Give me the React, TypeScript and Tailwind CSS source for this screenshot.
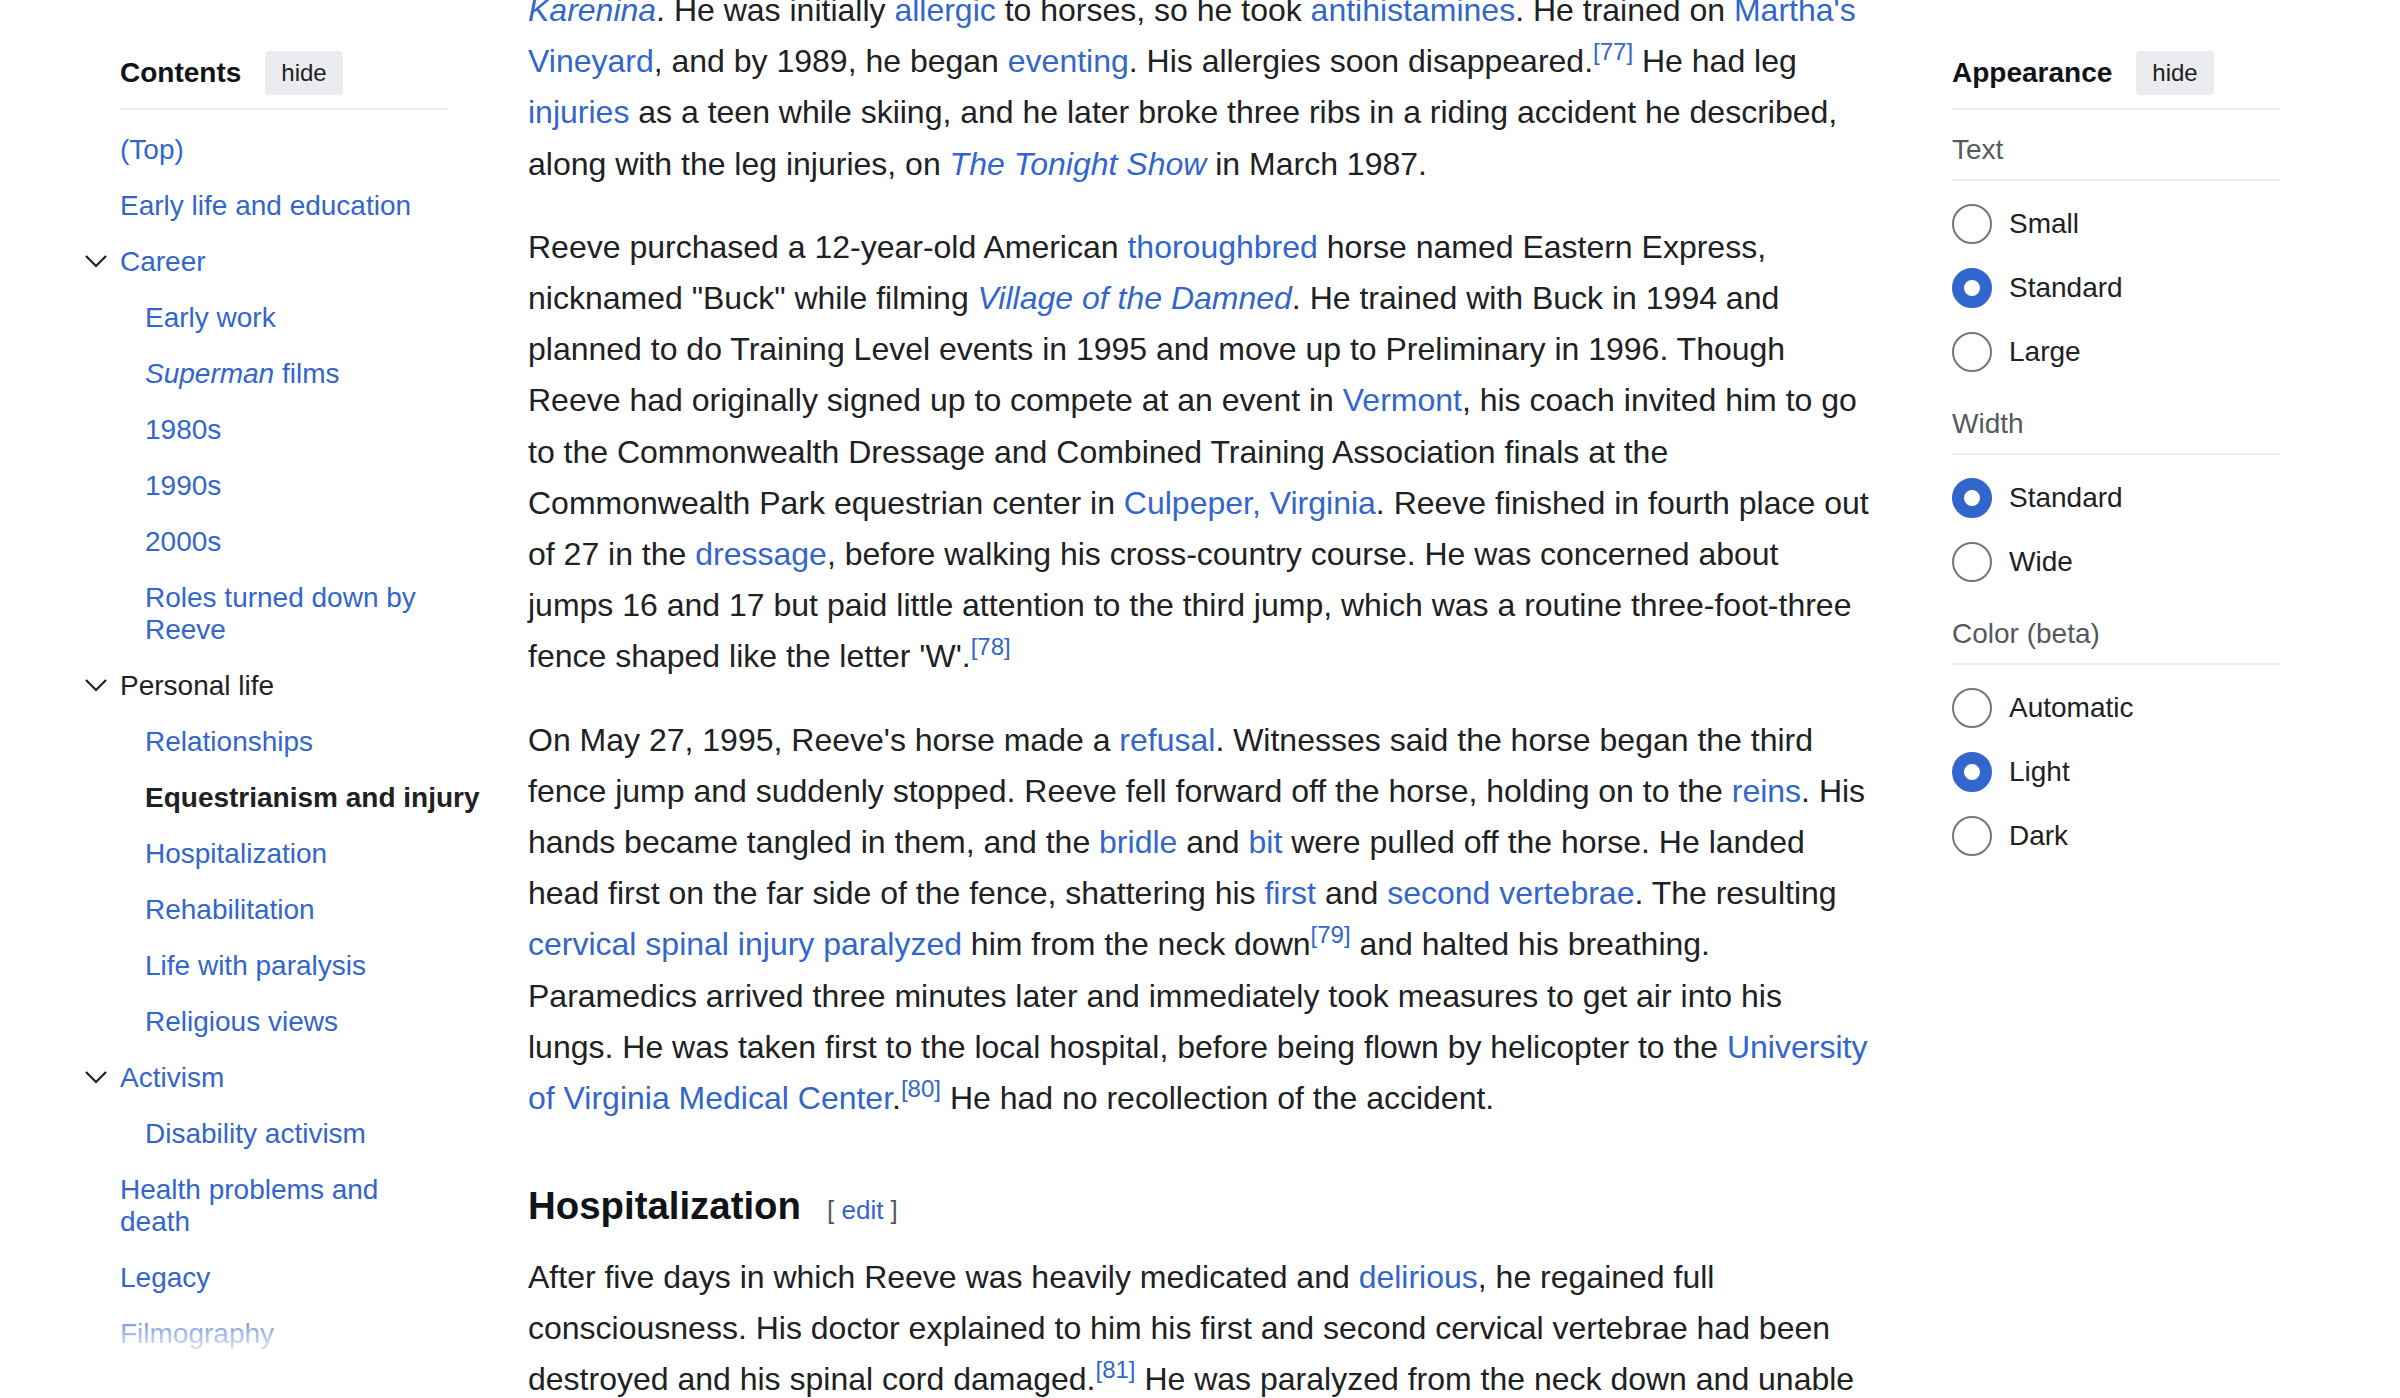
import type { ReactNode } from "react";

type TocItem = {
    label: ReactNode;
    level: 1 | 2;
    toggle?: boolean;
    active?: boolean;
    current?: boolean;
};

const tocItems: TocItem[] = [
    {label: "(Top)", level: 1},
    {label: "Early life and education", level: 1},
    {label: "Career", level: 1, toggle: true},
    {label: "Early work", level: 2},
    {label: <><i>Superman</i> films</>, level: 2},
    {label: "1980s", level: 2},
    {label: "1990s", level: 2},
    {label: "2000s", level: 2},
    {label: "Roles turned down by Reeve", level: 2},
    {label: "Personal life", level: 1, toggle: true, active: true},
    {label: "Relationships", level: 2},
    {label: "Equestrianism and injury", level: 2, current: true},
    {label: "Hospitalization", level: 2},
    {label: "Rehabilitation", level: 2},
    {label: "Life with paralysis", level: 2},
    {label: "Religious views", level: 2},
    {label: "Activism", level: 1, toggle: true},
    {label: "Disability activism", level: 2},
    {label: "Health problems and death", level: 1},
    {label: "Legacy", level: 1},
    {label: "Filmography", level: 1},
];

function A({children, i}: { children: ReactNode, i?: boolean }) {
    return <a className={i ? "text-[#3366cc] italic" : "text-[#3366cc]"}>{children}</a>;
}

function Ref({n}: { n: number }) {
    return <sup className="text-[#3366cc]">[{n}]</sup>;
}

function Chevron() {
    return (
        <svg width="22" height="12" viewBox="0 0 22 12" fill="none">
            <path d="M1 1 L11 11 L21 1" stroke="#202122" strokeWidth="2.2"/>
        </svg>
    );
}

function PanelHeader({title}: { title: string }) {
    return (
        <div className="mt-[51px] pb-[13px] border-b-2 border-[#eaecf0]">
            <div className="flex items-center h-[44px]">
                <h2 className="text-[28px] leading-[32px] font-bold text-[#101418]">{title}</h2>
                <button
                    className="ml-[24px] h-[44px] px-[16px] rounded-[4px] bg-[#eaecf0] text-[24px] leading-[32px] text-[#202122]">
                    hide
                </button>
            </div>
        </div>
    );
}

function TableOfContents() {
    return (
        <nav className="relative w-[328px] shrink-0 h-full">
            <PanelHeader title="Contents"/>
            <ul className="mt-[12px] text-[28px] leading-[32px]">
                {tocItems.map((item, idx) => (
                    <li key={idx} className={item.level === 2 ? "py-[12px] pl-[25px]" : "py-[12px]"}>
                        <div className="relative">
                            {item.toggle && (
                                <span className="absolute -left-[35px] top-[9px] flex">
                                    <Chevron/>
                                </span>
                            )}
                            {item.current ? (
                                <span className="font-bold text-[#202122] whitespace-nowrap">{item.label}</span>
                            ) : item.active ? (
                                <span className="text-[#202122]">{item.label}</span>
                            ) : (
                                <a className="text-[#3366cc]">{item.label}</a>
                            )}
                        </div>
                    </li>
                ))}
            </ul>
            <div
                className="absolute inset-x-0 bottom-0 h-[96px] bg-linear-to-b from-white/0 to-white to-60%"/>
        </nav>
    );
}

function Radio({label, checked}: { label: string, checked?: boolean }) {
    return (
        <label className="flex items-center gap-[17px] h-[40px]">
            <span
                className={checked
                    ? "w-[40px] h-[40px] rounded-full bg-white border-[12px] border-[#3366cc]"
                    : "w-[40px] h-[40px] rounded-full bg-white border-2 border-[#72777d]"}/>
            <span className="text-[28px] leading-[32px] text-[#202122]">{label}</span>
        </label>
    );
}

function OptionGroup({title, options, selected, first}: {
    title: string,
    options: string[],
    selected: string,
    first?: boolean
}) {
    return (
        <div className={first ? "mt-[24px]" : "mt-[36px]"}>
            <div className="pb-[13px] border-b-2 border-[#eaecf0] text-[28px] leading-[32px] text-[#54595d]">
                {title}
            </div>
            <div className="mt-[23px] flex flex-col gap-[24px]">
                {options.map(o => <Radio key={o} label={o} checked={o === selected}/>)}
            </div>
        </div>
    );
}

function AppearancePanel() {
    return (
        <aside className="w-[328px] shrink-0">
            <PanelHeader title="Appearance"/>
            <OptionGroup first title="Text" options={["Small", "Standard", "Large"]} selected="Standard"/>
            <OptionGroup title="Width" options={["Standard", "Wide"]} selected="Standard"/>
            <OptionGroup title="Color (beta)" options={["Automatic", "Light", "Dark"]} selected="Light"/>
        </aside>
    );
}

function Article() {
    return (
        <main className="w-[1344px] shrink-0 -mt-[15px] text-[32px] leading-[51.2px] text-[#202122] whitespace-nowrap">
            <p className="mb-8">
                <A i>Karenina</A>. He was initially <A>allergic</A> to horses, so he took <A>antihistamines</A>. He
                trained on <A>Martha's</A><br/>
                <A>Vineyard</A>, and by 1989, he began <A>eventing</A>. His allergies soon disappeared.<Ref n={77}/> He
                had leg<br/>
                <A>injuries</A> as a teen while skiing, and he later broke three ribs in a riding accident he
                described,<br/>
                along with the leg injuries, on <A i>The Tonight Show</A> in March 1987.
            </p>
            <p className="mb-8">
                Reeve purchased a 12-year-old American <A>thoroughbred</A> horse named Eastern Express,<br/>
                nicknamed "Buck" while filming <A i>Village of the Damned</A>. He trained with Buck in 1994 and<br/>
                planned to do Training Level events in 1995 and move up to Preliminary in 1996. Though<br/>
                Reeve had originally signed up to compete at an event in <A>Vermont</A>, his coach invited him to
                go<br/>
                to the Commonwealth Dressage and Combined Training Association finals at the<br/>
                Commonwealth Park equestrian center in <A>Culpeper, Virginia</A>. Reeve finished in fourth place
                out<br/>
                of 27 in the <A>dressage</A>, before walking his cross-country course. He was concerned about<br/>
                jumps 16 and 17 but paid little attention to the third jump, which was a routine
                three-foot-three<br/>
                fence shaped like the letter 'W'.<Ref n={78}/>
            </p>
            <p className="mb-8">
                On May 27, 1995, Reeve's horse made a <A>refusal</A>. Witnesses said the horse began the third<br/>
                fence jump and suddenly stopped. Reeve fell forward off the horse, holding on to the <A>reins</A>.
                His<br/>
                hands became tangled in them, and the <A>bridle</A> and <A>bit</A> were pulled off the horse. He
                landed<br/>
                head first on the far side of the fence, shattering his <A>first</A> and <A>second vertebrae</A>. The
                resulting<br/>
                <A>cervical spinal injury</A> <A>paralyzed</A> him from the neck down<Ref n={79}/> and halted his
                breathing.<br/>
                Paramedics arrived three minutes later and immediately took measures to get air into his<br/>
                lungs. He was taken first to the local hospital, before being flown by helicopter to the <A>University</A><br/>
                <A>of Virginia Medical Center</A>.<Ref n={80}/> He had no recollection of the accident.
            </p>
            <h3 className="pt-[19.2px] mb-[10px] text-[38.4px] leading-[61.44px] font-bold text-[#101418]">
                Hospitalization
                <span className="ml-[26px] text-[26px] font-normal text-[#54595d]">
                    [ <a className="text-[#3366cc]">edit</a> ]
                </span>
            </h3>
            <p>
                After five days in which Reeve was heavily medicated and <A>delirious</A>, he regained full<br/>
                consciousness. His doctor explained to him his first and second cervical vertebrae had been<br/>
                destroyed and his spinal cord damaged.<Ref n={81}/> He was paralyzed from the neck down and unable
            </p>
        </main>
    );
}

export default function App() {
    return (
        <div
            className="h-[1398px] overflow-hidden bg-white px-[120px] flex gap-[80px] font-['Liberation_Sans',Arial,sans-serif]">
            <TableOfContents/>
            <Article/>
            <AppearancePanel/>
        </div>
    );
}
